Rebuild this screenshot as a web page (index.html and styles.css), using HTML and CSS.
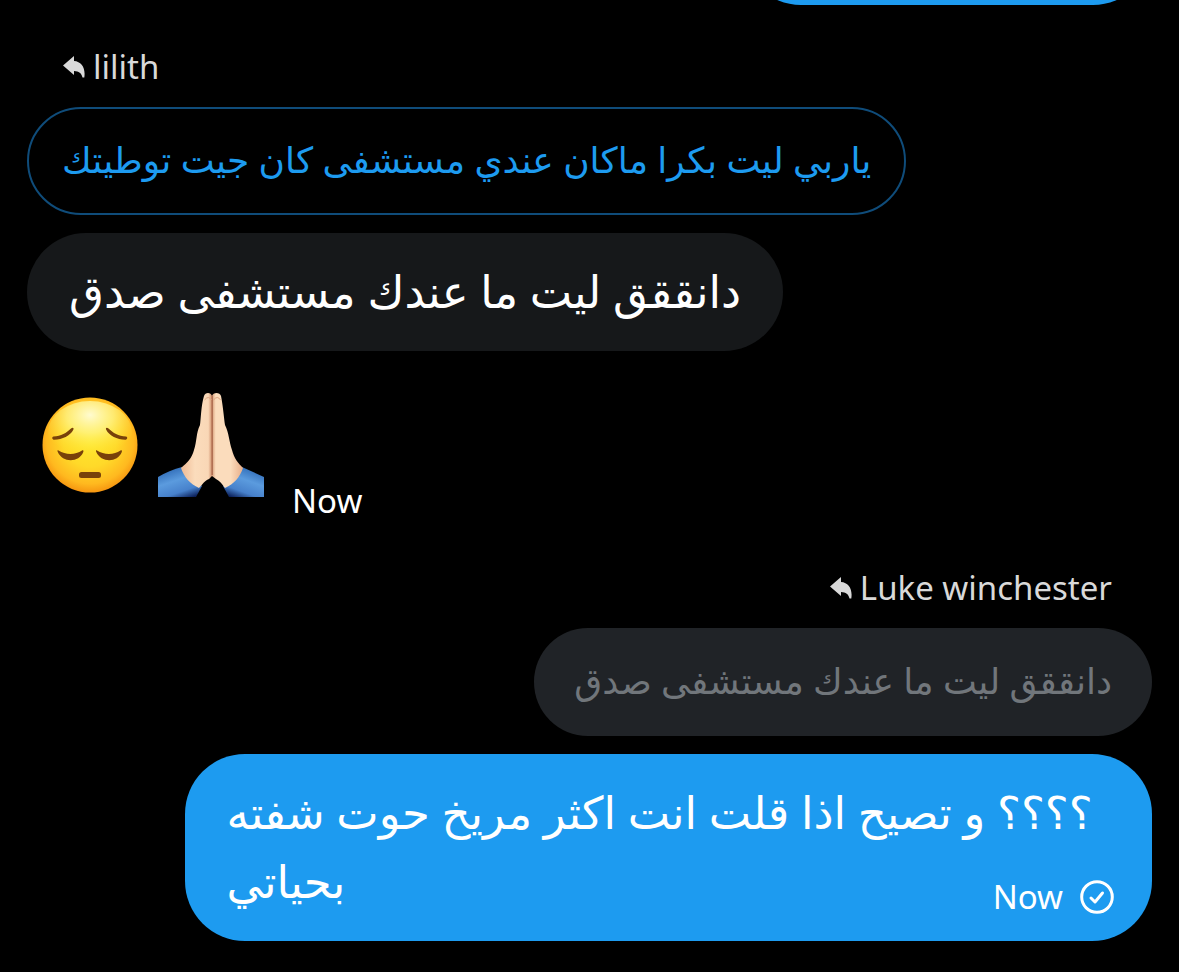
FILE: index.html
```html
<!DOCTYPE html>
<html lang="ar">
<head>
<meta charset="utf-8">
<meta name="viewport" content="width=device-width, initial-scale=1">
<title>Messages</title>
<link rel="stylesheet" href="styles.css">
</head>
<body>
<main class="thread">
  <div class="bubble bubble-sent bubble-previous"></div>

  <section class="group group-received">
    <div class="reply-to">
      <svg class="reply-icon" viewBox="0 0 22 22" aria-hidden="true"><path d="M0 9.500 11 0v5C18.500 5.500 22.800 12 21.300 21.500H19.500C18.500 17 16 15.500 11 15V19z"/></svg>
      <span dir="ltr">lilith</span>
    </div>
    <blockquote class="quote quote-outline" dir="rtl">ياربي ليت بكرا ماكان عندي مستشفى كان جيت توطيتك</blockquote>
    <p class="bubble bubble-received" dir="rtl">دانققق ليت ما عندك مستشفى صدق</p>
    <div class="emoji-row">
      <svg class="emoji-face" viewBox="0 0 96 96" role="img">
        <defs>
          <radialGradient id="skin" cx="50%" cy="45%" r="56%">
            <stop offset="0" stop-color="#ffe92e"/><stop offset=".5" stop-color="#ffd929"/><stop offset=".82" stop-color="#ffb91f"/><stop offset="1" stop-color="#f5920f"/>
          </radialGradient>
          <radialGradient id="shine" cx="50%" cy="22%" r="62%"><stop offset="0" stop-color="#fffbd0"/><stop offset=".45" stop-color="#fff58a" stop-opacity=".75"/><stop offset="1" stop-color="#ffe834" stop-opacity="0"/></radialGradient>
        </defs>
        <circle cx="48" cy="48" r="47.500" fill="url(#skin)"/>
        <ellipse cx="48" cy="36" rx="42" ry="32" fill="url(#shine)"/>
        <g fill="#78410a">
          <path d="M11.500 39.500c7.500-.5 13-3.500 17.500-8 1.800-1.700 3.200-.6 2.300 1.300-3 6-11 9.800-19 10-2.300 0-2.800-3-.8-3.300zM84 39.500c-7.500-.5-13-3.500-17.500-8-1.800-1.700-3.200-.6-2.300 1.300 3 6 11 9.800 19 10 2.300 0 2.800-3 .8-3.300z"/>
          <path d="M16.500 53.500c7 4.500 17 4.500 23.500 0 1-.7 1.800 0 1.300 1.500C37 66 20.500 66 15.800 55c-.7-1.500-.2-2.200.7-1.500zM55 53.500c7 4.500 17 4.500 23.500 0 1-.7 1.800 0 1.300 1.500C75.500 66 59 66 54.300 55c-.7-1.500-.2-2.200.7-1.500z"/>
          <rect x="37" y="75" width="22" height="6" rx="2.500"/>
        </g>
      </svg>
      <svg class="emoji-hands" viewBox="0 0 106 106" role="img">
        <defs>
          <linearGradient id="handLeft"><stop offset="0" stop-color="#efba94"/><stop offset=".45" stop-color="#fbdcbc"/><stop offset=".88" stop-color="#f9d7b6"/><stop offset="1" stop-color="#cf8f6c"/></linearGradient>
          <linearGradient id="handRight"><stop offset="0" stop-color="#d79c78"/><stop offset=".12" stop-color="#fbdcbc"/><stop offset=".6" stop-color="#fbdcbc"/><stop offset="1" stop-color="#e8ad88"/></linearGradient>
          <linearGradient id="sleeveLeft" x1=".3" y1="0" x2=".8" y2="1"><stop offset="0" stop-color="#2c68b4"/><stop offset=".4" stop-color="#5b9bde"/><stop offset=".75" stop-color="#4781cb"/><stop offset="1" stop-color="#0b1f58"/></linearGradient>
          <linearGradient id="sleeveRight" x1=".7" y1="0" x2=".2" y2="1"><stop offset="0" stop-color="#2c68b4"/><stop offset=".4" stop-color="#5b9bde"/><stop offset=".75" stop-color="#4781cb"/><stop offset="1" stop-color="#0b1f58"/></linearGradient>
        </defs>
        <path fill="url(#sleeveLeft)" d="M0 85Q12 78 24 75L44 94 38 105H0z"/>
        <path fill="url(#sleeveRight)" d="M106 85Q95 80 84 75L65 94 71 105H106z"/>
        <path fill="url(#handLeft)" d="M54 4C53 0 47 0 46 4 43 14 43 26 42 33 38 41 39 49 36 58 34 66 29 71 23 76 26 85 32 92 41 96 45 92 46 89 51 87L54 84z"/>
        <path fill="url(#handRight)" d="M54 4C55 0 62 0 63 4 65 14 66 26 67 33 71 41 71 49 74 58 76 66 80 71 85 76 82 85 76 92 67 96 64 92 62 89 58 87L54 84z"/>
        <path d="M54.200 4V83" stroke="#a9674b" stroke-width="1.300" fill="none"/>
        <path d="M46.500 8q4-5 7 0M55.500 8q4-5 7 0" stroke="#dca582" fill="none"/>
      </svg>
      <time class="time">Now</time>
    </div>
  </section>

  <section class="group group-sent">
    <div class="reply-to">
      <svg class="reply-icon" viewBox="0 0 22 22" aria-hidden="true"><path d="M0 9.500 11 0v5C18.500 5.500 22.800 12 21.300 21.500H19.500C18.500 17 16 15.500 11 15V19z"/></svg>
      <span dir="ltr">Luke winchester</span>
    </div>
    <blockquote class="quote quote-filled" dir="rtl">دانققق ليت ما عندك مستشفى صدق</blockquote>
    <div class="bubble bubble-sent">
      <p class="bubble-text" dir="rtl">؟؟؟؟ و تصيح اذا قلت انت اكثر مريخ حوت شفته بحياتي</p>
      <div class="status">
        <time class="time">Now</time>
        <svg class="sent-icon" viewBox="0 0 34 34" aria-hidden="true"><circle cx="17" cy="17" r="15.300"/><path d="m11 18 4 4 7.500-9"/></svg>
      </div>
    </div>
  </section>
</main>
</body>
</html>
```
FILE: styles.css
```css
* {
  box-sizing: border-box;
}

body {
  margin: 0;
  background: #000;
  color: #fff;
  font-family: "Noto Sans", "DejaVu Sans", sans-serif;
  overflow-x: hidden;
}

p,
blockquote {
  margin: 0;
}

.thread {
  display: flex;
  flex-direction: column;
  padding: 0 27px 30px;
  overflow: hidden;
}

.group {
  display: flex;
  flex-direction: column;
}

.group-received {
  align-items: flex-start;
  margin-top: 38px;
}

.group-sent {
  align-items: flex-end;
  margin-top: 43px;
}

.reply-to {
  display: flex;
  align-items: center;
  gap: 8px;
  padding: 0 40px 0 36px;
  margin-bottom: 16px;
  color: #d9d9d9;
  font-size: 33px;
  line-height: 48px;
}

.reply-icon {
  width: 22px;
  height: 22px;
  fill: currentColor;
}

.quote {
  padding: 23px 40px 25px;
  border-radius: 54px;
  font-size: 36px;
  line-height: 60px;
  margin-bottom: 18px;
}

.quote-outline {
  padding: 21px 33px 23px;
  border: 2px solid #0f4c7a;
  color: #1d9bf0;
}

.quote-filled {
  background: #202327;
  color: #71767b;
}

.bubble {
  max-width: 86%;
  padding: 23px 42px 26px;
  border-radius: 60px;
  font-size: 45px;
  line-height: 69px;
}

.bubble-received {
  background: #16181a;
}

.bubble-sent {
  display: grid;
  background: #1d9bf0;
}

.bubble-previous {
  align-self: flex-end;
  width: 410px;
  height: 118px;
  margin-top: -113px;
}

.bubble-text,
.status {
  grid-area: 1 / 1;
}

.bubble-text {
  text-align: left;
}

.status {
  display: flex;
  align-items: center;
  align-self: end;
  justify-self: end;
  gap: 17px;
  margin: 0 -4px -2px 0;
}

.time {
  font-size: 33px;
  line-height: 40px;
}

.sent-icon {
  width: 34px;
  height: 34px;
  fill: none;
  stroke: #fff;
  stroke-width: 3;
  stroke-linecap: round;
  stroke-linejoin: round;
}

.emoji-row {
  display: flex;
  align-items: flex-end;
  padding: 41px 15px 0;
}

.emoji-face {
  width: 96px;
  height: 96px;
  margin-bottom: 28px;
}

.emoji-hands {
  width: 106px;
  height: 106px;
  margin: 0 28px 23px 20px;
}
```
